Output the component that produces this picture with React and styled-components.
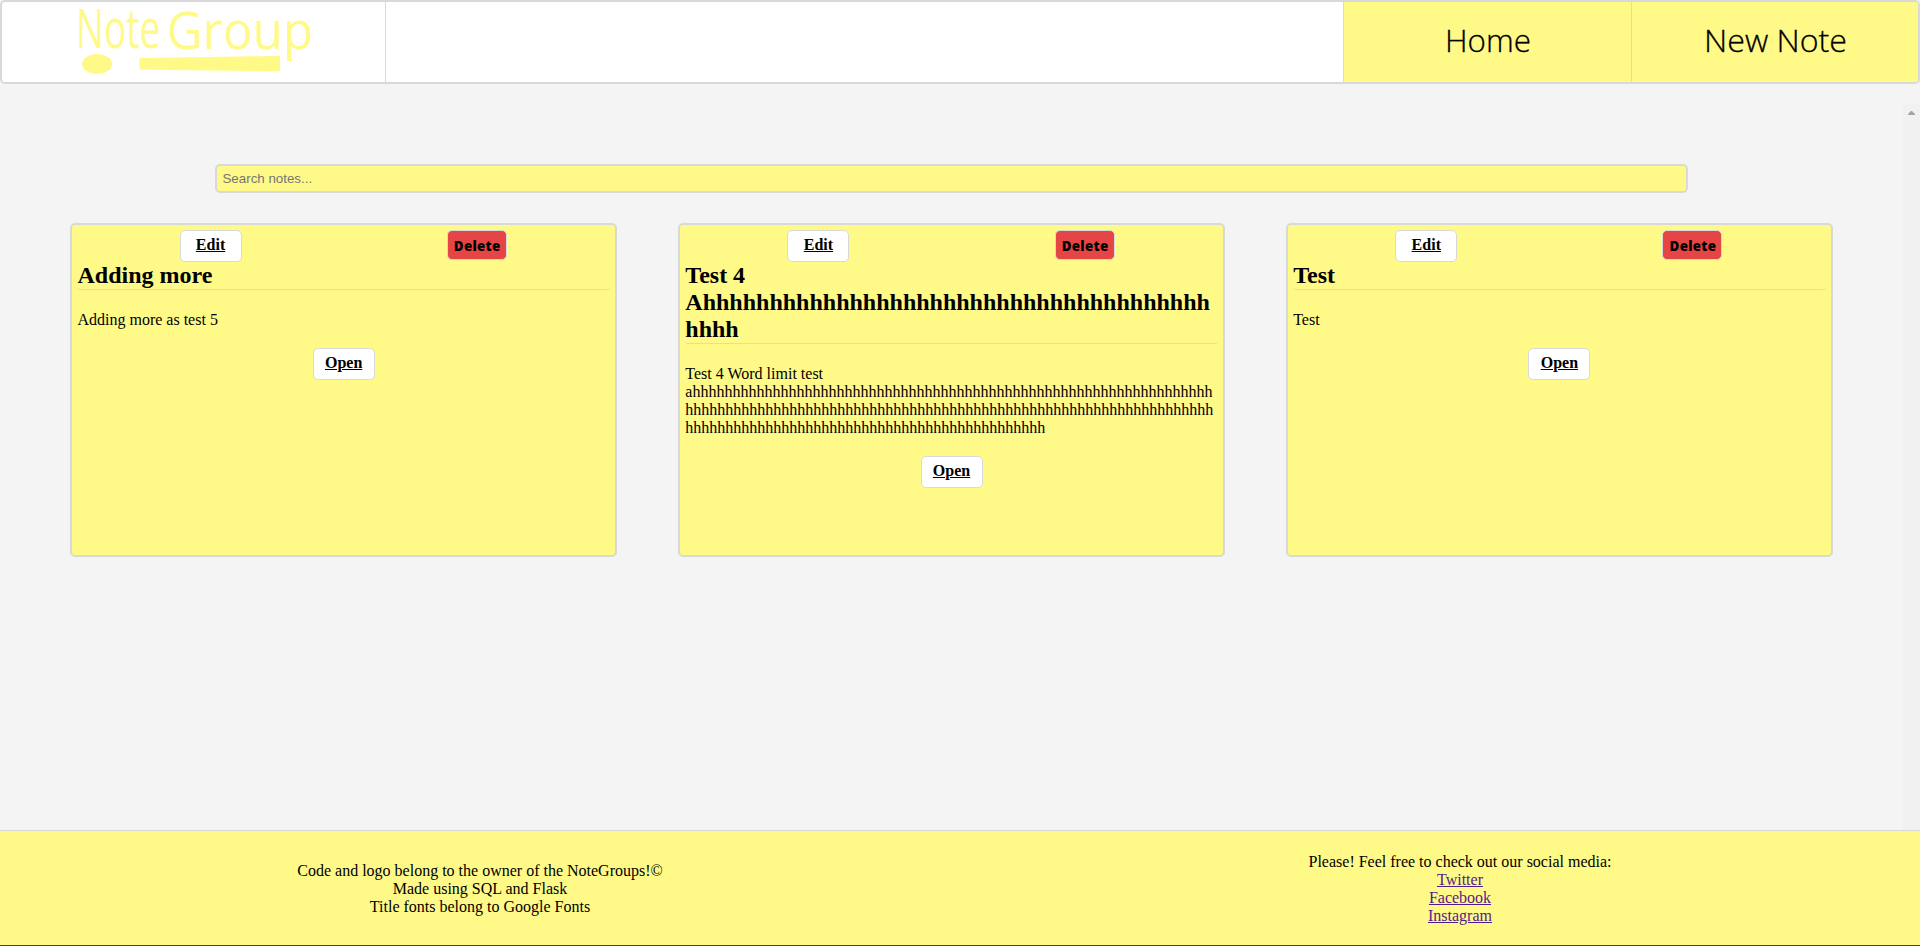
import React from "react";
import styled, { createGlobalStyle, css } from "styled-components";

const yellow = "#fffa88";
const line = "#d9d9d9";

const GlobalStyle = createGlobalStyle`
  * { box-sizing: border-box; }
  body {
    margin: 0;
    background: #f4f4f4;
    color: #000;
    font: 16px/18px "Liberation Serif", "Times New Roman", serif;
    overflow: hidden;
  }
`;

const Page = styled.div`
  display: flex;
  flex-direction: column;
  height: 946px;
`;

const Header = styled.header`
  display: flex;
  flex: none;
  height: 84px;
  border: 2px solid ${line};
  border-radius: 5px;
  background: #fff;
  overflow: hidden;
`;

const LogoCell = styled.div`
  width: 384px;
  border-right: 1px solid ${line};
`;

const NavSpacer = styled.div`
  flex: 1;
`;

const NavLink = styled.a`
  display: flex;
  align-items: center;
  justify-content: center;
  width: ${(p) => p.$width}px;
  padding-bottom: 2px;
  border-left: 1px solid ${line};
  background: ${yellow};
  font: 300 31px/40px "Open Sans", sans-serif;
`;

const NavLabel = styled.svg`
  display: block;
  overflow: visible;
  stroke: #000;
  stroke-width: 0.3px;
`;

const Scroller = styled.div`
  display: flex;
  flex: 1;
  margin-top: 20px;
  min-height: 0;
`;

const Content = styled.main`
  flex: 1;
  padding: 60px 70.46px 0;
`;

const ScrollTrack = styled.div`
  display: flex;
  justify-content: center;
  width: 17px;
  padding-top: 7px;
  background: #f1f1f1;
`;

const Search = styled.input`
  display: block;
  width: 1472.8px;
  height: 29px;
  margin: 0 auto 30px;
  padding: 0 5.4px;
  border: 2px solid ${line};
  border-radius: 5px;
  background: ${yellow};
  font: 13.333px "Liberation Sans", Arial, sans-serif;
  &::placeholder { color: #757575; }
`;

const Cards = styled.div`
  display: grid;
  grid-template-columns: repeat(3, 1fr);
  column-gap: 61.54px;
`;

const Card = styled.article`
  height: 334px;
  min-width: 0;
  padding: 5px;
  border: 2px solid ${line};
  border-radius: 5px;
  background: ${yellow};
`;

const Actions = styled.div`
  display: grid;
  grid-template-columns: 1fr 1fr;
  justify-items: center;
  align-items: start;
  height: 32px;
`;

const button = css`
  border: 1px solid ${line};
  border-radius: 5px;
`;

const LinkButton = styled.a`
  ${button}
  display: block;
  width: 62px;
  height: 32px;
  padding-top: 4.6px;
  background: #fff;
  font-weight: bold;
  text-align: center;
  text-decoration: underline;
`;

const DeleteButton = styled.button`
  ${button}
  width: 60px;
  height: 30px;
  padding: 1px 0 0 1px;
  background: #e64545;
  color: #000;
  font: 800 13.333px/18px "Open Sans", sans-serif;
  letter-spacing: 0.3px;
`;

const Title = styled.h2`
  margin: 0;
  border-bottom: 1px solid ${line};
  border-radius: 3px;
  font-size: 24px;
  line-height: 27px;
  overflow-wrap: break-word;
`;

const Body = styled.p`
  margin: 20.6px 0 19.4px;
  overflow-wrap: break-word;
`;

const OpenRow = styled.div`
  display: flex;
  justify-content: center;
`;

const Footer = styled.footer`
  display: grid;
  grid-template-columns: 1fr 1fr;
  align-items: center;
  flex: none;
  height: 116px;
  padding-top: 1.2px;
  border-top: 1px solid ${line};
  border-bottom: 1px solid #444;
  background: ${yellow};
  text-align: center;
`;

const FooterList = styled.ul`
  margin: 0;
  padding: 0 0 0 ${(p) => p.$indent || 0}px;
  list-style: none;
`;

const SocialLink = styled.a`
  color: #551a8b;
  text-decoration: underline;
`;

const notes = [
  { title: "Adding more", body: "Adding more as test 5" },
  {
    title: "Test 4 A" + "h".repeat(42),
    body: "Test 4 Word limit test a" + "h".repeat(176),
  },
  { title: "Test", body: "Test" },
];

const Logo = () => (
  <svg width="383" height="80" viewBox="2 2 383 80" fill={yellow} fontFamily="'Open Sans', sans-serif">
    <text x="76" y="48" fontSize="54" textLength="84.5" lengthAdjust="spacingAndGlyphs">Note</text>
    <text x="166.5" y="48.5" fontSize="51" textLength="146.5" lengthAdjust="spacingAndGlyphs">Group</text>
    <ellipse cx="97" cy="64" rx="15" ry="10" />
    <polygon points="139.5,58 280,56 280,71.3 139.5,69.7" />
  </svg>
);

const Nav = ({ label, cell, width }) => (
  <NavLink $width={cell}>
    <NavLabel width={width} height="40">
      <text x="0" y="31" textLength={width} lengthAdjust="spacingAndGlyphs">{label}</text>
    </NavLabel>
  </NavLink>
);

const Note = ({ title, body }) => (
  <Card>
    <Actions>
      <LinkButton>Edit</LinkButton>
      <DeleteButton>Delete</DeleteButton>
    </Actions>
    <Title>{title}</Title>
    <Body>{body}</Body>
    <OpenRow>
      <LinkButton>Open</LinkButton>
    </OpenRow>
  </Card>
);

export default function App() {
  return (
    <Page>
      <GlobalStyle />
      <Header>
        <LogoCell><Logo /></LogoCell>
        <NavSpacer />
        <Nav label="Home" cell={288} width={86} />
        <Nav label="New Note" cell={287} width={143} />
      </Header>
      <Scroller>
        <Content>
          <Search placeholder="Search notes..." />
          <Cards>
            {notes.map((note) => <Note key={note.title} {...note} />)}
          </Cards>
        </Content>
        <ScrollTrack>
          <svg width="7" height="4" viewBox="0 0 7 4" fill="#a3a3a3"><path d="M0 4V3L3 0H4L7 3V4Z" /></svg>
        </ScrollTrack>
      </Scroller>
      <Footer>
        <FooterList>
          <li>Code and logo belong to the owner of the NoteGroups!©</li>
          <li>Made using SQL and Flask</li>
          <li>Title fonts belong to Google Fonts</li>
        </FooterList>
        <FooterList $indent={40}>
          <li>Please! Feel free to check out our social media:</li>
          <li><SocialLink>Twitter</SocialLink></li>
          <li><SocialLink>Facebook</SocialLink></li>
          <li><SocialLink>Instagram</SocialLink></li>
        </FooterList>
      </Footer>
    </Page>
  );
}
